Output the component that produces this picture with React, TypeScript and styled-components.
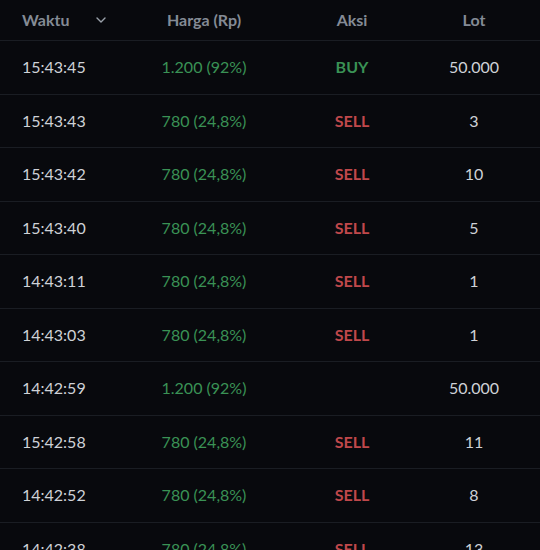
import React from "react";
import styled, { createGlobalStyle } from "styled-components";

const Global = createGlobalStyle`
  html, body { margin: 0; padding: 0; background: #08090d; }
  body { font-family: Lato, "Open Sans", sans-serif; }
`;

const Table = styled.div`
  width: 540px;
  height: 550px;
  overflow: hidden;
  background: #08090d;
`;

const Row = styled.div<{ $head?: boolean }>`
  display: grid;
  grid-template-columns: 118px 128px 168px 76px;
  align-items: center;
  padding: 0 28px 0 22px;
  height: ${(p) => (p.$head ? "40px" : "52.5px")};
  border-bottom: 1px solid #1a1d23;
  font-size: 16px;
`;

const Cell = styled.div<{ $align?: "left" | "center"; $color?: string; $bold?: boolean }>`
  text-align: ${(p) => p.$align ?? "center"};
  color: ${(p) => p.$color ?? "#cfd2d7"};
  font-weight: ${(p) => (p.$bold ? 700 : 400)};
  white-space: nowrap;
  padding-bottom: 1px;
`;

const HeadCell = styled.div<{ $align?: "left" | "center" }>`
  display: flex;
  align-items: center;
  justify-content: ${(p) => (p.$align === "left" ? "flex-start" : "center")};
  gap: 27px;
  color: #848b95;
  font-weight: 700;
  font-size: 16px;
  padding-bottom: 1px;
`;

const Chevron = () => (
  <svg width="10" height="6" viewBox="0 0 10 6" fill="none">
    <path d="M1 1l4 4 4-4" stroke="#9aa1aa" strokeWidth="1.4" strokeLinecap="round" strokeLinejoin="round" />
  </svg>
);

const GREEN = "#3a9255";
const RED = "#c0484b";

type Trade = { t: string; p: string; a: string; lot: string };

const data: Trade[] = [
  { t: "15:43:45", p: "1.200 (92%)", a: "BUY", lot: "50.000" },
  { t: "15:43:43", p: "780 (24,8%)", a: "SELL", lot: "3" },
  { t: "15:43:42", p: "780 (24,8%)", a: "SELL", lot: "10" },
  { t: "15:43:40", p: "780 (24,8%)", a: "SELL", lot: "5" },
  { t: "14:43:11", p: "780 (24,8%)", a: "SELL", lot: "1" },
  { t: "14:43:03", p: "780 (24,8%)", a: "SELL", lot: "1" },
  { t: "14:42:59", p: "1.200 (92%)", a: "", lot: "50.000" },
  { t: "15:42:58", p: "780 (24,8%)", a: "SELL", lot: "11" },
  { t: "14:42:52", p: "780 (24,8%)", a: "SELL", lot: "8" },
  { t: "14:42:38", p: "780 (24,8%)", a: "SELL", lot: "13" },
];

export default function App() {
  return (
    <>
      <Global />
      <Table>
        <Row $head>
          <HeadCell $align="left">
            Waktu <Chevron />
          </HeadCell>
          <HeadCell>Harga (Rp)</HeadCell>
          <HeadCell>Aksi</HeadCell>
          <HeadCell>Lot</HeadCell>
        </Row>
        {data.map((d, i) => (
          <Row key={i}>
            <Cell $align="left">{d.t}</Cell>
            <Cell $color={GREEN}>{d.p}</Cell>
            <Cell $bold $color={d.a === "BUY" ? GREEN : RED}>{d.a}</Cell>
            <Cell>{d.lot}</Cell>
          </Row>
        ))}
      </Table>
    </>
  );
}
